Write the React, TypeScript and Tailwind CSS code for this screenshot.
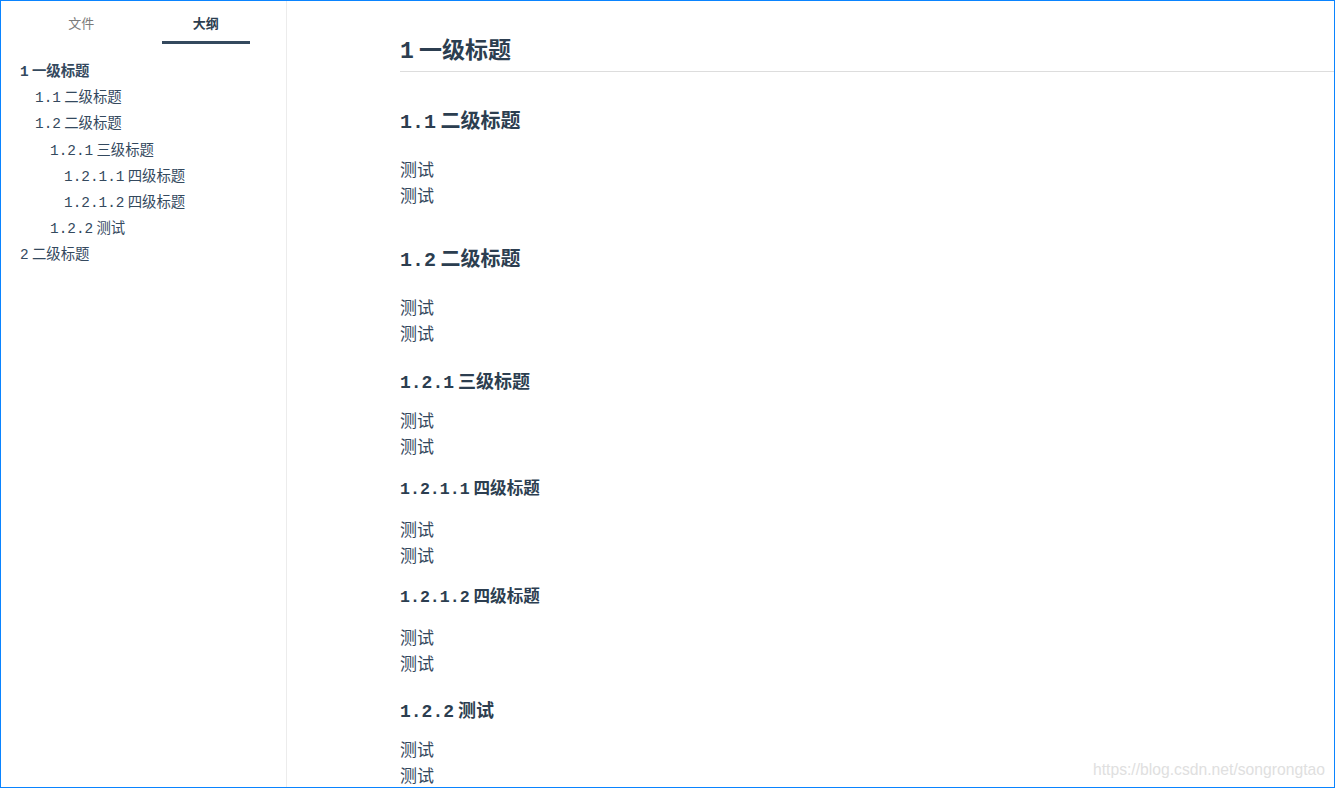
import React from 'react';

const mono = { fontFamily: "'Liberation Mono', monospace" };
const cjk = { fontFamily: "'Noto Sans CJK SC', 'Noto Sans', sans-serif" };

const outline = [
  { num: '1', title: '一级标题', level: 0, bold: true },
  { num: '1.1', title: '二级标题', level: 1 },
  { num: '1.2', title: '二级标题', level: 1 },
  { num: '1.2.1', title: '三级标题', level: 2 },
  { num: '1.2.1.1', title: '四级标题', level: 3 },
  { num: '1.2.1.2', title: '四级标题', level: 3 },
  { num: '1.2.2', title: '测试', level: 2 },
  { num: '2', title: '二级标题', level: 0 },
];

const indents = ['pl-[19px]', 'pl-[34px]', 'pl-[49px]', 'pl-[63px]'];

// number in a monospace face, title in CJK
function Title({ num, title }: { num: string; title: string }) {
  return (
    <>
      <span className="leading-none" style={mono}>{num}</span> {title}
    </>
  );
}

function Para({ className = '' }: { className?: string }) {
  return (
    <div className={`text-[17px] leading-[26px] text-[#34495e] ${className}`}>
      <p className="h-[26px]">测试</p>
      <p className="h-[26px]">测试</p>
    </div>
  );
}

export default function App() {
  return (
    <div className="relative w-[1335px] h-[788px] border border-[#0a84ff] bg-white overflow-hidden" style={cjk}>
      <div className="flex h-full">
        {/* sidebar */}
        <aside className="w-[286px] shrink-0 h-full border-r border-[#ececec]">
          <div className="flex justify-evenly pt-[13px]">
            <div className="w-[88px] text-center text-[13px] leading-[18px] text-[#7a7a7a] pb-[10px]">文件</div>
            <div className="w-[88px] text-center text-[13px] leading-[18px] font-bold text-[#2c3e50] pb-[9px] border-b-[3px] border-[#34495e]">
              大纲
            </div>
          </div>
          <ul className="mt-[13px]">
            {outline.map((item) => (
              <li
                key={item.num}
                className={`${indents[item.level]} h-[26.2px] text-[14.4px] leading-[26px] text-[#34495e] ${item.bold ? 'font-bold' : ''}`}
              >
                <Title num={item.num} title={item.title} />
              </li>
            ))}
          </ul>
        </aside>

        {/* content */}
        <main className="flex-1 pl-[113px] pt-[30px]">
          <div className="pb-[6px] border-b border-[#dddddd]">
            <h1 className="h-[34px] text-[23px] leading-[34px] font-bold text-[#2c3e50]">
              <Title num="1" title="一级标题" />
            </h1>
          </div>
          <h2 className="mt-[33px] h-[30px] text-[20px] leading-[30px] font-bold text-[#2c3e50]">
            <Title num="1.1" title="二级标题" />
          </h2>
          <Para className="mt-[21px]" />
          <h2 className="mt-[35px] h-[30px] text-[20px] leading-[30px] font-bold text-[#2c3e50]">
            <Title num="1.2" title="二级标题" />
          </h2>
          <Para className="mt-[21px]" />
          <h3 className="mt-[20px] h-[28px] text-[18px] leading-[28px] font-bold text-[#2c3e50]">
            <Title num="1.2.1" title="三级标题" />
          </h3>
          <Para className="mt-[13px]" />
          <h4 className="mt-[16px] h-[24px] text-[16.6px] leading-[24px] font-bold text-[#2c3e50]">
            <Title num="1.2.1.1" title="四级标题" />
          </h4>
          <Para className="mt-[17px]" />
          <h4 className="mt-[15px] h-[24px] text-[16.6px] leading-[24px] font-bold text-[#2c3e50]">
            <Title num="1.2.1.2" title="四级标题" />
          </h4>
          <Para className="mt-[17px]" />
          <h3 className="mt-[19px] h-[28px] text-[18px] leading-[28px] font-bold text-[#2c3e50]">
            <Title num="1.2.2" title="测试" />
          </h3>
          <Para className="mt-[13px]" />
        </main>
      </div>

      {/* watermark */}
      <div
        className="absolute right-[9px] bottom-[7px] text-[15.7px] leading-[20px] text-[#e0e0e0]"
        style={{ fontFamily: "'Liberation Sans', Arial, sans-serif" }}
      >
        https://blog.csdn.net/songrongtao
      </div>
    </div>
  );
}
